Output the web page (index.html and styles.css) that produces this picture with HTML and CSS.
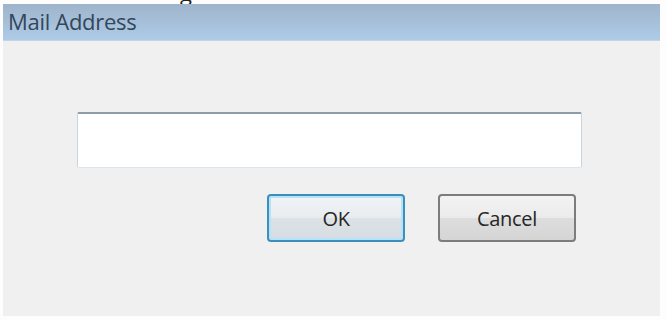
FILE: index.html
```html
<!DOCTYPE html>
<html lang="en">
<head>
    <meta charset="UTF-8">
    <meta name="viewport" content="width=device-width, initial-scale=1.0">
    <title>Mail Address</title>
    <link rel="stylesheet" href="styles.css">
</head>
<body>
    <div class="top-strip"><span class="cut-text">g</span></div>

    <div class="dialog">
        <div class="title-bar">Mail Address</div>
        <div class="dialog-body">
            <input type="text" class="mail-input">
            <div class="button-row">
                <button class="dialog-button default-button">OK</button>
                <button class="dialog-button">Cancel</button>
            </div>
        </div>
    </div>
</body>
</html>
```

FILE: styles.css
```css
body {
    margin: 0;
    padding: 0;
    background-color: #fdfdfd;
    font-family: "Open Sans", "Noto Sans", sans-serif;
}

.top-strip {
    height: 4px;
    overflow: hidden;
    padding-left: 180px;
}

.cut-text {
    display: block;
    font-size: 22px;
    line-height: 22px;
    margin-top: -19px;
    color: #222222;
}

.dialog {
    width: 657px;
    margin-left: 3px;
}

.title-bar {
    height: 36px;
    line-height: 34px;
    padding-left: 5px;
    font-size: 22px;
    letter-spacing: -0.3px;
    color: #34465a;
    background: linear-gradient(to bottom, #9eb4cb, #aecbe7);
    border-bottom: 1px solid #c4d4e2;
}

.dialog-body {
    height: 275px;
    background-color: #f0f0f0;
    padding: 71px 0 0 74px;
    box-sizing: border-box;
}

.mail-input {
    display: block;
    width: 505px;
    height: 56px;
    box-sizing: border-box;
    margin: 0;
    background-color: #ffffff;
    border: 1px solid #c8d5e0;
    border-top: 2px solid #8d9ca9;
    border-bottom-color: #dde5ec;
    border-radius: 2px;
    outline: none;
}

.button-row {
    display: flex;
    justify-content: flex-end;
    gap: 33px;
    width: 499px;
    margin-top: 26px;
}

.dialog-button {
    width: 138px;
    height: 48px;
    font-family: "Open Sans", "Noto Sans", sans-serif;
    font-size: 20px;
    letter-spacing: -0.3px;
    color: #262626;
    background: linear-gradient(to bottom, #f3f3f3 0%, #ebebeb 50%, #dddddd 51%, #d5d5d5 100%);
    border: 2px solid #7c7c7c;
    border-radius: 4px;
    padding: 0;
    margin: 0;
}

.default-button {
    border-color: #3d8fbb;
    box-shadow: inset 0 0 0 2px #b5e2f6;
    background: linear-gradient(to bottom, #f1f4f6 0%, #e8ecef 50%, #dce2e6 51%, #d6dde2 100%);
}
```
